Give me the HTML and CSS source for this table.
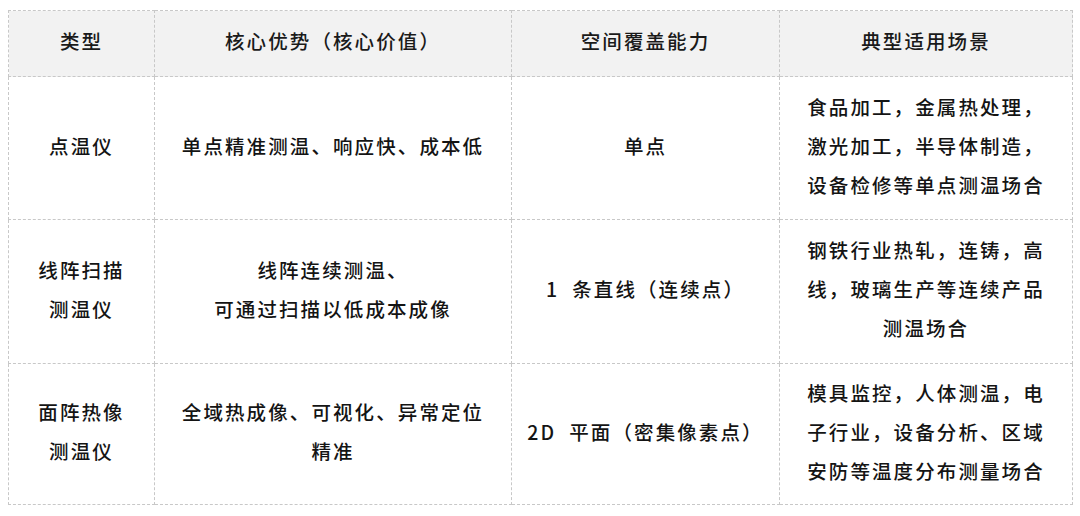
FILE: index.html
```html
<!DOCTYPE html>
<html lang="zh-CN">
<head>
<meta charset="utf-8">
<title>测温仪类型对比</title>
<link rel="stylesheet" href="styles.css">
</head>
<body>
<div class="wrap">
<table class="cmp">
  <colgroup>
    <col class="c1"><col class="c2"><col class="c3"><col class="c4">
  </colgroup>
  <thead>
    <tr class="rh">
      <th>类型</th>
      <th>核心优势（核心价值）</th>
      <th>空间覆盖能力</th>
      <th>典型适用场景</th>
    </tr>
  </thead>
  <tbody>
    <tr class="r1">
      <td>点温仪</td>
      <td>单点精准测温、响应快、成本低</td>
      <td>单点</td>
      <td>食品加工，金属热处理，<br>激光加工，半导体制造，<br>设备检修等单点测温场合</td>
    </tr>
    <tr class="r2">
      <td>线阵扫描<br>测温仪</td>
      <td>线阵连续测温、<br>可通过扫描以低成本成像</td>
      <td>1&nbsp;&nbsp;条直线（连续点）</td>
      <td>钢铁行业热轧，连铸，高<br>线，玻璃生产等连续产品<br>测温场合</td>
    </tr>
    <tr class="r3">
      <td>面阵热像<br>测温仪</td>
      <td>全域热成像、可视化、异常定位<br>精准</td>
      <td>2D&nbsp;&nbsp;平面（密集像素点）</td>
      <td>模具监控，人体测温，电<br>子行业，设备分析、区域<br>安防等温度分布测量场合</td>
    </tr>
  </tbody>
</table>
</div>
</body>
</html>
```

FILE: styles.css
```css
html, body {
  margin: 0;
  padding: 0;
  background: #ffffff;
}
.wrap {
  padding: 10px 8px 0 8px;
}
.cmp {
  width: 1064px;
  border-collapse: collapse;
  table-layout: fixed;
  font-family: "Noto Sans CJK SC", "Noto Sans", sans-serif;
  font-size: 19.5px;
  letter-spacing: 2.1px;
  line-height: 39px;
  color: #141414;
}
.c1 { width: 146px; }
.c2 { width: 357px; }
.c3 { width: 268px; }
.c4 { width: 293px; }
.cmp th, .cmp td {
  border: 1px dashed #c8c8c8;
  text-align: center;
  vertical-align: middle;
  padding: 0 6px 6px 6px;
  font-weight: 500;
}
.cmp th {
  background: #f2f2f2;
  color: #1a1a1a;
}
.rh { height: 66px; }
.r1 { height: 143px; }
.r2 { height: 144px; }
.r3 { height: 141px; }
```
